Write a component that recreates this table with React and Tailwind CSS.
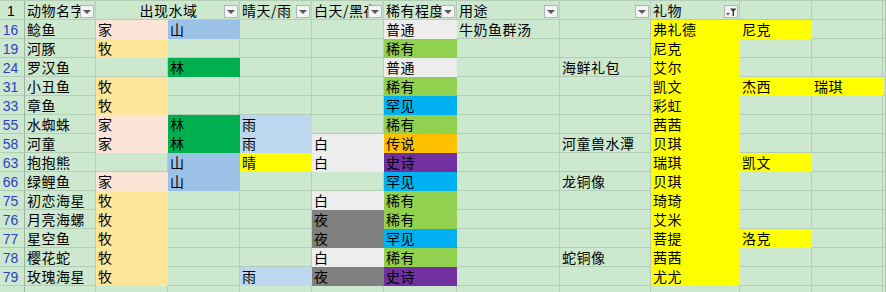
import React from "react";

const widths = [
  "w-[25px]",
  "w-[71px]",
  "w-[72px]",
  "w-[72px]",
  "w-[72px]",
  "w-[72px]",
  "w-[73px]",
  "w-[103px]",
  "w-[91px]",
  "w-[89px]",
  "w-[72px]",
  "w-[71px]",
];

// fill name -> bg + border (filled cells hide gridlines)
const fills = {
  home: "bg-[#fce4d6] border-[#fce4d6]",
  farm: "bg-[#ffe699] border-[#ffe699]",
  hill: "bg-[#9bc2e6] border-[#9bc2e6]",
  wood: "bg-[#00b050] border-[#00b050]",
  rain: "bg-[#bdd7ee] border-[#bdd7ee]",
  sun: "bg-[#ffff00] border-[#ffff00]",
  day: "bg-[#ededed] border-[#ededed]",
  night: "bg-[#808080] border-[#808080]",
  common: "bg-[#ededed] border-[#ededed]",
  rare: "bg-[#92d050] border-[#92d050]",
  scarce: "bg-[#00b0f0] border-[#00b0f0]",
  legend: "bg-[#ffc000] border-[#ffc000]",
  epic: "bg-[#7030a0] border-[#7030a0]",
  gift: "bg-[#ffff00] border-[#ffff00]",
};

const where = { 家: "home", 牧: "farm", 山: "hill", 林: "wood" };
const weather = { 雨: "rain", 晴: "sun" };
const time = { 白: "day", 夜: "night" };
const rarity = { 普通: "common", 稀有: "rare", 罕见: "scarce", 传说: "legend", 史诗: "epic" };

const rows = [
  ["16", "鲶鱼", "家", "山", "", "", "普通", "牛奶鱼群汤", "", "弗礼德", "尼克", ""],
  ["19", "河豚", "牧", "", "", "", "稀有", "", "", "尼克", "", ""],
  ["24", "罗汉鱼", "", "林", "", "", "普通", "", "海鲜礼包", "艾尔", "", ""],
  ["31", "小丑鱼", "牧", "", "", "", "稀有", "", "", "凯文", "杰西", "瑞琪"],
  ["33", "章鱼", "牧", "", "", "", "罕见", "", "", "彩虹", "", ""],
  ["55", "水蜘蛛", "家", "林", "雨", "", "稀有", "", "", "茜茜", "", ""],
  ["58", "河童", "家", "林", "雨", "白", "传说", "", "河童兽水潭", "贝琪", "", ""],
  ["63", "抱抱熊", "", "山", "晴", "白", "史诗", "", "", "瑞琪", "凯文", ""],
  ["66", "绿鲤鱼", "家", "山", "", "", "罕见", "", "龙铜像", "贝琪", "", ""],
  ["75", "初恋海星", "牧", "", "", "白", "稀有", "", "", "琦琦", "", ""],
  ["76", "月亮海螺", "牧", "", "", "夜", "稀有", "", "", "艾米", "", ""],
  ["77", "星空鱼", "牧", "", "", "夜", "罕见", "", "", "菩提", "洛克", ""],
  ["78", "樱花蛇", "牧", "", "", "白", "稀有", "", "蛇铜像", "茜茜", "", ""],
  ["79", "玫瑰海星", "牧", "", "雨", "夜", "史诗", "", "", "尤尤", "", ""],
];

function fillFor(col, v) {
  if (!v) return null;
  if (col === 2 || col === 3) return where[v];
  if (col === 4) return weather[v];
  if (col === 5) return time[v];
  if (col === 6) return rarity[v];
  if (col === 9 || col === 10 || col === 11) return "gift";
  return null;
}

function Cell({ w, fill, children, className = "" }) {
  return (
    <div
      className={`${w} ${fill ? fills[fill] : "border-[#b3cdb6]"} relative shrink-0 h-full border-r border-b overflow-hidden whitespace-nowrap pl-[2px] pt-[1px] leading-[17px] ${className}`}
    >
      {children}
    </div>
  );
}

function Drop() {
  return (
    <span className="absolute right-[1px] top-[4px] w-[14px] h-[13px] bg-[#f4f4f4] border border-[#b4b4b4] flex items-center justify-center">
      <span className="w-0 h-0 border-l-[4px] border-r-[4px] border-t-[4px] border-l-transparent border-r-transparent border-t-[#595959]" />
    </span>
  );
}

function FilterDrop() {
  return (
    <span className="absolute right-[1px] top-[4px] w-[14px] h-[13px] bg-[#f4f4f4] border border-[#b4b4b4] flex items-center justify-center">
      <svg width="12" height="10" viewBox="0 0 12 10">
        <polygon points="1,6 5,6 3,8.5" fill="#595959" />
        <polygon points="5,1.5 11.5,1.5 9,4.5 9,9 7.5,9 7.5,4.5" fill="#404040" />
      </svg>
    </span>
  );
}

export default function App() {
  return (
    <div
      className="w-[886px] h-[292px] overflow-hidden bg-[#cce8cf] text-[14px] tracking-[0.5px] text-black"
      style={{ fontFamily: '"Noto Sans CJK SC", "Noto Sans", sans-serif' }}
    >
      {/* header row */}
      <div className="flex h-[20px] border-t border-[#b3cdb6]">
        <Cell w={widths[0]} className="!border-r-[#9cb59f] !pl-[4px] pr-[6px] text-center">
          <span className="font-['Liberation_Sans'] tracking-normal">1</span>
        </Cell>
        <Cell w={widths[1]}>
          动物名字
          <Drop />
        </Cell>
        <Cell w="w-[144px]" className="text-center">
          出现水域
          <Drop />
        </Cell>
        <Cell w={widths[4]}>
          晴天/雨
          <Drop />
        </Cell>
        <Cell w={widths[5]}>
          白天/黑夜
          <Drop />
        </Cell>
        <Cell w={widths[6]}>
          稀有程度
          <Drop />
        </Cell>
        <Cell w={widths[7]}>
          用途
          <Drop />
        </Cell>
        <Cell w={widths[8]}>
          <Drop />
        </Cell>
        <Cell w={widths[9]}>
          礼物
          <FilterDrop />
        </Cell>
        <Cell w={widths[10]} />
        <Cell w={widths[11]} />
        <Cell w="w-[3px]" />
      </div>

      {rows.map((r) => (
        <div key={r[0]} className="flex h-[19px]">
          <Cell w={widths[0]} className="!border-r-[#9cb59f] !pl-0 pr-[3px] text-center text-[#2c3fc6]">
            <span className="font-['Liberation_Sans'] tracking-normal">{r[0]}</span>
          </Cell>
          {r.slice(1).map((v, i) => (
            <Cell key={i} w={widths[i + 1]} fill={fillFor(i + 1, v)}>
              {v}
            </Cell>
          ))}
          <Cell w="w-[3px]" />
        </div>
      ))}

      {/* partial row below */}
      <div className="flex h-[19px]">
        {widths.map((w, i) => (
          <Cell key={i} w={w} className={i === 0 ? "!border-r-[#9cb59f]" : ""} />
        ))}
        <Cell w="w-[3px]" />
      </div>
    </div>
  );
}
